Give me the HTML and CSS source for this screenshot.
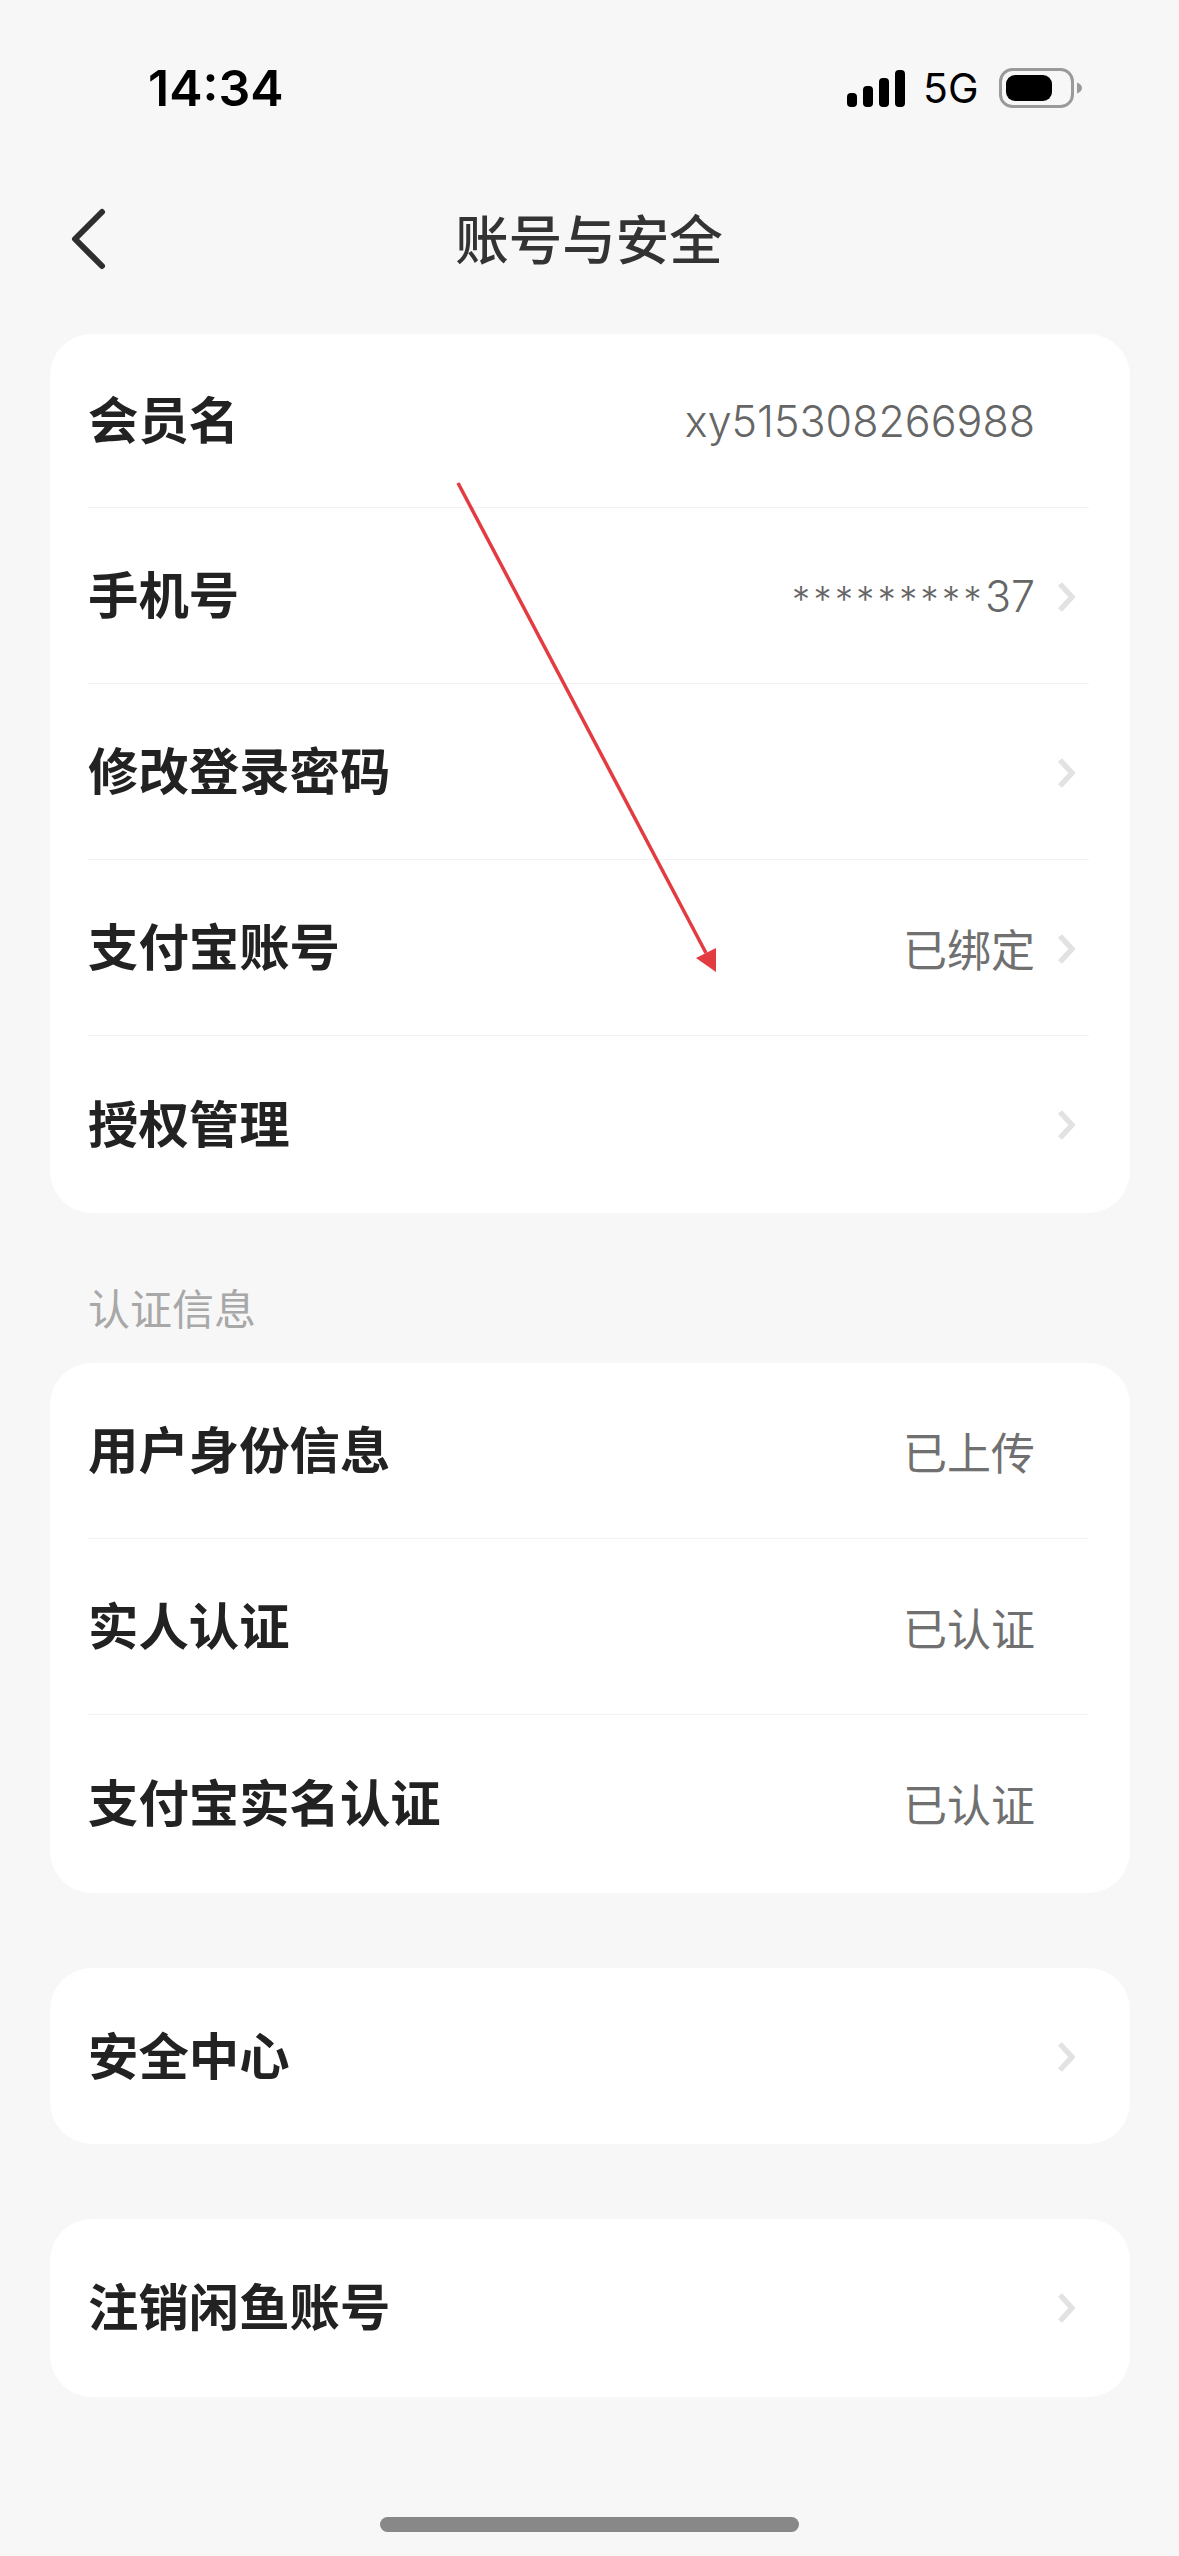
FILE: index.html
```html
<!DOCTYPE html>
<html lang="zh-CN">
<head>
    <meta charset="UTF-8">
    <meta name="viewport" content="width=device-width, initial-scale=1.0">
    <title>账号与安全</title>
    <link rel="stylesheet" href="styles.css">
</head>
<body>
    <div class="page">
        <div class="status-bar">
            <span class="time">14:34</span>
            <div class="status-icons">
                <svg class="signal" width="58" height="37" viewBox="0 0 58 37">
                    <rect x="0" y="23" width="10" height="14" rx="4" />
                    <rect x="16" y="16" width="10" height="21" rx="4" />
                    <rect x="32" y="8" width="10" height="29" rx="4" />
                    <rect x="48" y="0" width="10" height="37" rx="4" />
                </svg>
                <span class="network">5G</span>
                <svg class="battery" width="84" height="40" viewBox="0 0 84 40">
                    <rect x="1.5" y="1.5" width="72" height="37" rx="12" fill="none" stroke="#9a9a9a" stroke-width="3" />
                    <rect x="7" y="7" width="46" height="26" rx="9" fill="#000" />
                    <path d="M78 14.5 C81 15.5 83 17.5 83 20 C83 22.5 81 24.5 78 25.5 Z" fill="#9a9a9a" />
                </svg>
            </div>
        </div>

        <div class="nav-bar">
            <svg class="back" width="40" height="64" viewBox="0 0 40 64">
                <path d="M34 5 L7 32 L34 59" fill="none" stroke="#2e2e2e" stroke-width="6" stroke-linecap="round" stroke-linejoin="round" />
            </svg>
            <h1 class="nav-title">账号与安全</h1>
        </div>

        <div class="card card-account">
            <div class="row row-first">
                <span class="row-label">会员名</span>
                <span class="row-value row-value-num">xy515308266988</span>
                <span class="chevron-slot"></span>
            </div>
            <div class="row">
                <span class="row-label">手机号</span>
                <span class="row-value row-value-num"><span class="mask">*********</span>37</span>
                <span class="chevron-slot"><svg class="chevron" width="18" height="32" viewBox="0 0 18 32"><path d="M3 3 L15 16 L3 29" /></svg></span>
            </div>
            <div class="row">
                <span class="row-label">修改登录密码</span>
                <span class="chevron-slot"><svg class="chevron" width="18" height="32" viewBox="0 0 18 32"><path d="M3 3 L15 16 L3 29" /></svg></span>
            </div>
            <div class="row">
                <span class="row-label">支付宝账号</span>
                <span class="row-value">已绑定</span>
                <span class="chevron-slot"><svg class="chevron" width="18" height="32" viewBox="0 0 18 32"><path d="M3 3 L15 16 L3 29" /></svg></span>
            </div>
            <div class="row">
                <span class="row-label">授权管理</span>
                <span class="chevron-slot"><svg class="chevron" width="18" height="32" viewBox="0 0 18 32"><path d="M3 3 L15 16 L3 29" /></svg></span>
            </div>
        </div>

        <div class="section-title">认证信息</div>

        <div class="card card-tall">
            <div class="row">
                <span class="row-label">用户身份信息</span>
                <span class="row-value">已上传</span>
                <span class="chevron-slot"></span>
            </div>
            <div class="row">
                <span class="row-label">实人认证</span>
                <span class="row-value">已认证</span>
                <span class="chevron-slot"></span>
            </div>
            <div class="row">
                <span class="row-label">支付宝实名认证</span>
                <span class="row-value">已认证</span>
                <span class="chevron-slot"></span>
            </div>
        </div>

        <div class="card card-single">
            <div class="row">
                <span class="row-label">安全中心</span>
                <span class="chevron-slot"><svg class="chevron" width="18" height="32" viewBox="0 0 18 32"><path d="M3 3 L15 16 L3 29" /></svg></span>
            </div>
        </div>

        <div class="card card-single card-tall">
            <div class="row">
                <span class="row-label">注销闲鱼账号</span>
                <span class="chevron-slot"><svg class="chevron" width="18" height="32" viewBox="0 0 18 32"><path d="M3 3 L15 16 L3 29" /></svg></span>
            </div>
        </div>

        <div class="home-bar"></div>

        <!-- red annotation drawn over the list -->
        <svg class="annotation" width="1179" height="2556" viewBox="0 0 1179 2556">
            <line x1="458" y1="483" x2="706" y2="953" stroke="#e23b40" stroke-width="3.5" />
            <polygon points="716,948 696,958 716,972" fill="#e23b40" />
        </svg>
    </div>
</body>
</html>
```

FILE: styles.css
```css
* {
    box-sizing: border-box;
}
body {
    margin: 0;
    background-color: #f7f7f7;
    font-family: Inter, "Noto Sans CJK SC", sans-serif;
}
.page {
    position: relative;
    width: 1179px;
    height: 2556px;
    padding: 0 49px 0 50px;
    overflow: hidden;
}
.status-bar {
    display: flex;
    align-items: center;
    justify-content: space-between;
    height: 68px;
    margin: 54px 47px 0 98px;
}
.time {
    font-size: 50px;
    font-weight: 600;
    color: #000;
}
.status-icons {
    display: flex;
    align-items: center;
}
.signal {
    fill: #000;
    margin-right: 18px;
}
.network {
    font-size: 41px;
    color: #000;
    width: 76px;
}
.nav-bar {
    position: relative;
    display: flex;
    align-items: center;
    justify-content: center;
    height: 64px;
    margin-top: 85px;
}
.back {
    position: absolute;
    left: 18px;
    top: 0;
}
.nav-title {
    margin: 0 2px 0 0;
    padding-bottom: 6px;
    font-size: 53.5px;
    font-weight: 500;
    color: #333;
}
.card {
    width: 1080px;
    padding: 0 41px 0 38px;
    background-color: #fff;
    border-radius: 42px;
}
.card-account {
    margin-top: 63px;
    padding-bottom: 1px;
}
.card-tall {
    padding-bottom: 2px;
}
.card-single {
    margin-top: 75px;
}
.row {
    display: flex;
    align-items: center;
    height: 176px;
    padding-right: 14px;
    border-bottom: 1px solid #f2f2f2;
}
.row:last-child {
    border-bottom: none;
}
.row-first {
    height: 174px;
}
.row-label {
    padding-bottom: 6px;
    font-size: 50.4px;
    font-weight: 700;
    color: #222;
    margin-right: auto;
}
.row-value {
    font-size: 44px;
    font-weight: 400;
    color: #707070;
}
.row-value-num {
    font-size: 43px;
    font-weight: 300;
    color: #666;
}
.mask {
    font-size: 36px;
    letter-spacing: 3.4px;
}
.chevron-slot {
    display: flex;
    align-items: center;
    justify-content: flex-end;
    width: 40px;
    padding-top: 2px;
}
.chevron {
    fill: none;
    stroke: #e2e2e2;
    stroke-width: 5.5;
}
.section-title {
    display: flex;
    align-items: center;
    height: 150px;
    padding-top: 36px;
    padding-left: 38px;
    font-size: 42px;
    color: #a8a8a8;
}
.home-bar {
    position: absolute;
    left: 380px;
    top: 2517px;
    width: 419px;
    height: 15px;
    border-radius: 8px;
    background-color: #888;
}
.annotation {
    position: absolute;
    left: 0;
    top: 0;
}
```
